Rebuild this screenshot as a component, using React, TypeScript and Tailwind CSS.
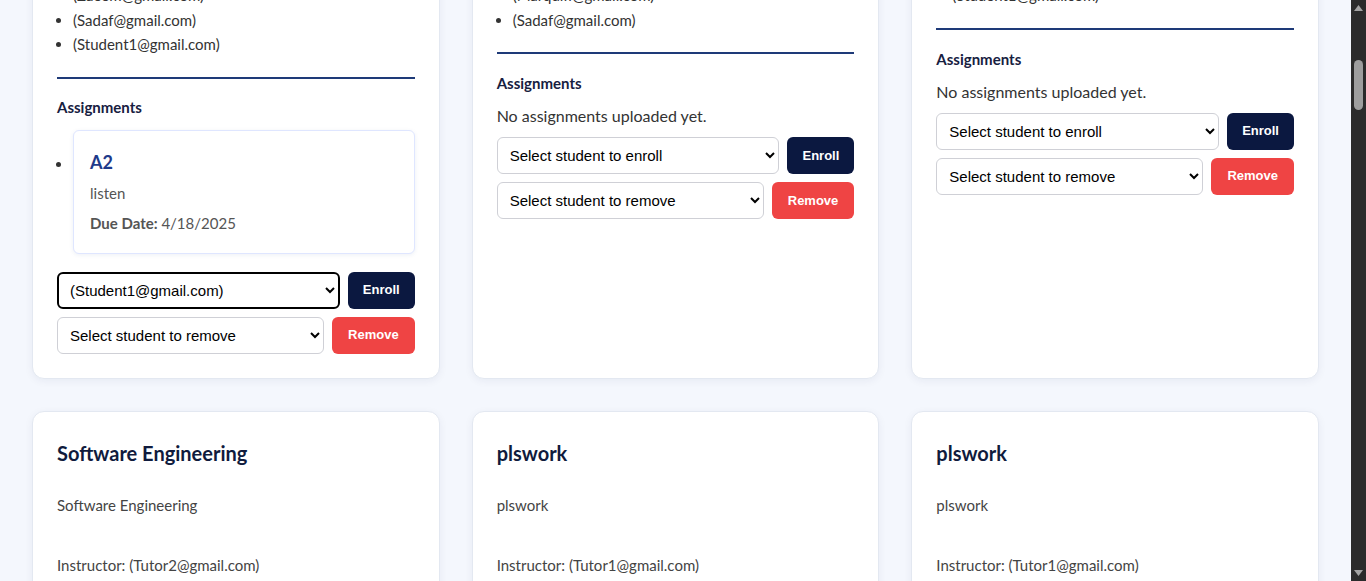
import { useState } from "react";

type Assignment = { title: string; desc: string; due: string };

type Course = {
  students: string[];
  assignments: Assignment[];
  focused?: boolean;
};

const enrolled: Course[] = [
  {
    students: ["(Zaeem@gmail.com)", "(Sadaf@gmail.com)", "(Student1@gmail.com)"],
    assignments: [{ title: "A2", desc: "listen", due: "4/18/2025" }],
    focused: true,
  },
  {
    students: ["(Marquifi@gmail.com)", "(Sadaf@gmail.com)"],
    assignments: [],
  },
  {
    students: ["(Student1@gmail.com)"],
    assignments: [],
  },
];

const others = [
  { title: "Software Engineering", desc: "Software Engineering", instructor: "(Tutor2@gmail.com)" },
  { title: "plswork", desc: "plswork", instructor: "(Tutor1@gmail.com)" },
  { title: "plswork", desc: "plswork", instructor: "(Tutor1@gmail.com)" },
];

const body = { fontFamily: "Lato, 'Open Sans', sans-serif" };
const arial = { fontFamily: "'Liberation Sans', Arial, sans-serif" };

export default function App() {
  return (
    <div className="flex h-[581px] overflow-hidden bg-[#f4f7fd]" style={body}>
      <main className="flex-1 px-8">
        <div className="-mt-[42px] grid grid-cols-3 gap-x-8 gap-y-8">
          {enrolled.map((c, i) => (
            <EnrolledCard key={i} course={c} />
          ))}
          {others.map((c, i) => (
            <div
              key={i}
              className="rounded-xl border border-[#e3e8f1] bg-white px-6 pt-6 pb-6 shadow-[0_2px_8px_rgba(20,40,90,0.06)]"
            >
              <h3 className="mt-[3px] text-[20px] leading-7 font-bold text-[#101b3d]">{c.title}</h3>
              <p className="mt-[27px] text-[15px] leading-[22px] text-[#444]">{c.desc}</p>
              <p className="mt-[38px] text-[15px] leading-[22px] text-[#444]">Instructor: {c.instructor}</p>
            </div>
          ))}
        </div>
      </main>
      <Scrollbar />
    </div>
  );
}

function EnrolledCard({ course }: { course: Course }) {
  const [enroll, setEnroll] = useState(course.focused ? "s1" : "");
  const hasWork = course.assignments.length > 0;
  return (
    <div className="rounded-xl border border-[#e3e8f1] bg-white p-6 shadow-[0_2px_8px_rgba(20,40,90,0.06)]">
      <ul className="list-disc pl-4 text-[15px] leading-[24.5px] text-[#333]">
        {course.students.map((s) => (
          <li key={s}>{s}</li>
        ))}
      </ul>
      <div className="mt-5 h-[2px] bg-[#1e3a78]" />
      <h4 className={hasWork ? "mt-[17px] text-[15px] leading-[22px] font-bold text-[#17203f]" : "mt-[18px] text-[15px] leading-[22px] font-bold text-[#17203f]"}>
        Assignments
      </h4>
      {hasWork ? (
        <ul className="mt-3 list-disc pl-4 text-[#333]">
          {course.assignments.map((a) => (
            <li key={a.title}>
              <div className="rounded-md border border-[#dfe6ff] bg-white px-4 pt-[17px] pb-[19px] shadow-[0_1px_4px_rgba(30,58,138,0.08)]">
                <h5 className="text-[18px] leading-7 font-bold text-[#1e3a8a]">{a.title}</h5>
                <p className="mt-[6px] text-[15px] leading-[22px] text-[#555]">{a.desc}</p>
                <p className="mt-2 text-[15px] leading-[22px] text-[#555]">
                  <span className="font-bold">Due Date:</span> {a.due}
                </p>
              </div>
            </li>
          ))}
        </ul>
      ) : (
        <p className="mt-[10px] text-[16px] leading-6 text-[#333]">No assignments uploaded yet.</p>
      )}
      <div className={hasWork ? "mt-[18px] flex flex-col gap-2" : "mt-[9px] flex flex-col gap-2"}>
        <div className="flex gap-2">
          <select
            value={enroll}
            onChange={(e) => setEnroll(e.target.value)}
            className={
              course.focused
                ? "h-[37px] min-w-0 flex-1 rounded-md border-2 border-black bg-white pl-[7px] text-[15px] text-black"
                : "h-[37px] min-w-0 flex-1 rounded-md border border-[#cfd0d6] bg-white pl-2 text-[15px] text-black"
            }
            style={arial}
          >
            <option value="">Select student to enroll</option>
            <option value="s1">(Student1@gmail.com)</option>
          </select>
          <button className="h-[37px] rounded-md bg-[#0b1840] px-[15px] text-[13px] font-bold text-white" style={arial}>
            Enroll
          </button>
        </div>
        <div className="flex gap-2">
          <select
            defaultValue=""
            className="h-[37px] min-w-0 flex-1 rounded-md border border-[#cfd0d6] bg-white pl-2 text-[15px] text-black"
            style={arial}
          >
            <option value="">Select student to remove</option>
          </select>
          <button className="h-[37px] rounded-md bg-[#ef4444] px-4 text-[13px] font-bold text-white" style={arial}>
            Remove
          </button>
        </div>
      </div>
    </div>
  );
}

function Scrollbar() {
  return (
    <div className="flex w-[15px] flex-col items-center bg-[#2b2b2b]">
      <svg width="9" height="6" viewBox="0 0 9 6" className="mt-[5px]">
        <path d="M4.5 0 L9 6 L0 6 Z" fill="#a3a3a3" />
      </svg>
      <div className="mt-[49px] h-[50px] w-[9px] rounded-full bg-[#9e9e9e]" />
      <div className="flex-1" />
      <svg width="9" height="6" viewBox="0 0 9 6" className="mb-[5px]">
        <path d="M0 0 L9 0 L4.5 6 Z" fill="#a3a3a3" />
      </svg>
    </div>
  );
}
